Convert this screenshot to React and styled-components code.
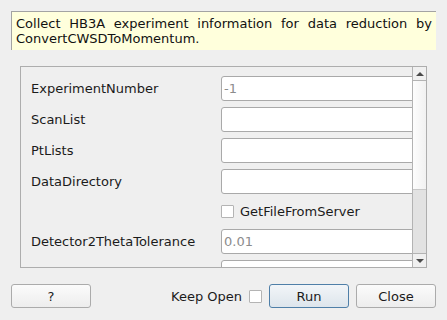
import React from 'react'
import styled, { createGlobalStyle } from 'styled-components'

const GlobalStyle = createGlobalStyle`
  html, body {
    margin: 0;
    padding: 0;
    background: #efefef;
  }
  body {
    font-family: 'DejaVu Sans', 'Liberation Sans', sans-serif;
    font-size: 13px;
    color: #1b1b1b;
  }
`

const Dialog = styled.div`
  width: 447px;
  height: 320px;
  box-sizing: border-box;
  padding: 11px 11px 0 11px;
  display: flex;
  flex-direction: column;
  overflow: hidden;
`

const Description = styled.div`
  background: #ffffdc;
  border-top: 1px solid #a3a3a3;
  border-left: 1px solid #a3a3a3;
  padding: 4px 4px 4px 4px;
  height: 38px;
  box-sizing: border-box;
  height: 39px;
  line-height: 15px;
  text-align: justify;
  color: #111;
`

const ScrollBox = styled.div`
  margin: 16px 9px 0 9px;
  height: 202px;
  box-sizing: border-box;
  border: 1px solid #adadad;
  display: flex;
`

const Viewport = styled.div`
  flex: 1;
  overflow: hidden;
  padding-top: 9px;
  display: flex;
  flex-direction: column;
`

const Row = styled.div`
  display: grid;
  grid-template-columns: 200px 200px;
  align-items: center;
  height: ${(p) => p.$h || 25}px;
  margin-bottom: 6px;
  flex-shrink: 0;
`

const Label = styled.span`
  padding-left: 10px;
  white-space: nowrap;
`

const Field = styled.input`
  box-sizing: border-box;
  height: 25px;
  width: 200px;
  margin: 0;
  border: 1px solid #a9a9a9;
  border-radius: 3px;
  background: #fff;
  padding: 0 2px;
  font-family: inherit;
  font-size: 13px;
  outline: none;
  &::placeholder {
    color: #8c8c8c;
  }
`

const CheckWrap = styled.label`
  grid-column: 2;
  display: flex;
  align-items: center;
  gap: 6px;
  white-space: nowrap;
`

const Box = styled.span`
  display: inline-block;
  width: 13px;
  height: 13px;
  box-sizing: border-box;
  border: 1px solid #b4b4b4;
  background: #fff;
  border-radius: 1px;
  flex-shrink: 0;
`

const ScrollBar = styled.div`
  width: 14px;
  box-sizing: border-box;
  border-left: 1px solid #b3b3b3;
  display: flex;
  flex-direction: column;
`

const ArrowButton = styled.div`
  height: 14px;
  box-sizing: border-box;
  display: flex;
  align-items: center;
  justify-content: center;
  background: #f0f0f0;
  ${(p) => (p.$down ? 'border-top: 1px solid #b3b3b3;' : 'border-bottom: 1px solid #b3b3b3;')}
  &::after {
    content: '';
    width: 0;
    height: 0;
    border-left: 4px solid transparent;
    border-right: 4px solid transparent;
    ${(p) => (p.$down ? 'border-top: 4px solid #4a4a4a;' : 'border-bottom: 4px solid #4a4a4a;')}
  }
`

const Track = styled.div`
  flex: 1;
  background: linear-gradient(to right, #fdfdfd, #f1f1f1);
`

const Handle = styled.div`
  height: 64px;
  background: #e2e2e2;
  border-top: 1px solid #c8c8c8;
  box-sizing: border-box;
`

const ButtonBar = styled.div`
  margin-top: 16px;
  display: flex;
  align-items: center;
`

const Button = styled.button`
  box-sizing: border-box;
  width: 80px;
  height: 24px;
  margin: 0;
  padding: 0;
  font-family: inherit;
  font-size: 13px;
  color: #1b1b1b;
  border: 1px solid ${(p) => (p.$primary ? '#4f7fa8' : '#ababab')};
  border-radius: 3px;
  background: ${(p) =>
    p.$primary
      ? 'linear-gradient(to bottom, #f2f5f8, #dde5ec)'
      : 'linear-gradient(to bottom, #fbfbfb, #ededed)'};
`

const Spacer = styled.div`
  flex: 1;
`

const KeepOpen = styled.label`
  display: flex;
  align-items: center;
  gap: 7px;
  margin-right: 7px;
  white-space: nowrap;
`

const Gap = styled.div`
  width: ${(p) => p.$w}px;
`

const fields = [
  { name: 'ExperimentNumber', placeholder: '-1' },
  { name: 'ScanList' },
  { name: 'PtLists' },
  { name: 'DataDirectory' },
]

export default function App() {
  return (
    <>
      <GlobalStyle />
      <Dialog>
        <Description>
          Collect HB3A experiment information for data reduction by ConvertCWSDToMomentum.
        </Description>
        <ScrollBox>
          <Viewport>
            {fields.map((f) => (
              <Row key={f.name}>
                <Label>{f.name}</Label>
                <Field placeholder={f.placeholder || ''} />
              </Row>
            ))}
            <Row $h={23}>
              <CheckWrap>
                <Box />
                GetFileFromServer
              </CheckWrap>
            </Row>
            <Row>
              <Label>Detector2ThetaTolerance</Label>
              <Field placeholder="0.01" />
            </Row>
            <Row>
              <Label>OutputWorkspace</Label>
              <Field />
            </Row>
          </Viewport>
          <ScrollBar>
            <ArrowButton />
            <Track />
            <Handle />
            <ArrowButton $down />
          </ScrollBar>
        </ScrollBox>
        <ButtonBar>
          <Button>?</Button>
          <Spacer />
          <KeepOpen>
            Keep Open
            <Box />
          </KeepOpen>
          <Button $primary>Run</Button>
          <Gap $w={7} />
          <Button>Close</Button>
        </ButtonBar>
      </Dialog>
    </>
  )
}
